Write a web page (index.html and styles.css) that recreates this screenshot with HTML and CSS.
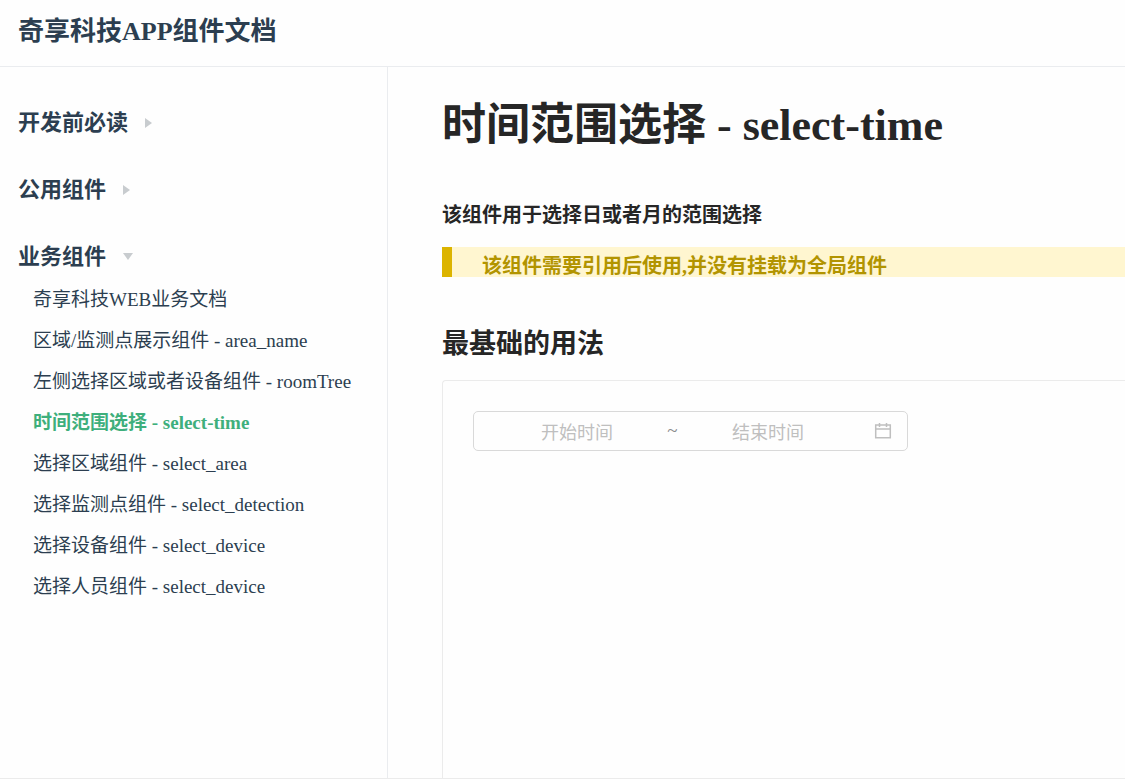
FILE: index.html
```html
<!DOCTYPE html>
<html lang="zh-CN">
<head>
    <meta charset="UTF-8">
    <meta name="viewport" content="width=device-width, initial-scale=1.0">
    <title>时间范围选择 - select-time</title>
    <link rel="stylesheet" href="styles.css">
</head>
<body>
    <header class="navbar">
        <a href="#" class="site-name">奇享科技APP组件文档</a>
    </header>

    <div class="layout">
        <!-- Sidebar -->
        <nav class="sidebar">
            <button type="button" class="group-title">开发前必读 <span class="arrow right"></span></button>
            <button type="button" class="group-title">公用组件 <span class="arrow right"></span></button>
            <button type="button" class="group-title">业务组件 <span class="arrow down"></span></button>
            <ul class="group-items">
                <li><a href="#">奇享科技WEB业务文档</a></li>
                <li><a href="#">区域/监测点展示组件 - area_name</a></li>
                <li><a href="#">左侧选择区域或者设备组件 - roomTree</a></li>
                <li><a href="#" class="active">时间范围选择 - select-time</a></li>
                <li><a href="#">选择区域组件 - select_area</a></li>
                <li><a href="#">选择监测点组件 - select_detection</a></li>
                <li><a href="#">选择设备组件 - select_device</a></li>
                <li><a href="#">选择人员组件 - select_device</a></li>
            </ul>
        </nav>

        <!-- Content -->
        <main class="content">
            <h1>时间范围选择 - select-time</h1>
            <h4>该组件用于选择日或者月的范围选择</h4>
            <div class="warning">该组件需要引用后使用,并没有挂载为全局组件</div>
            <h2>最基础的用法</h2>

            <section class="demo">
                <div class="range-picker">
                    <input type="text" placeholder="开始时间" aria-label="开始时间">
                    <span class="separator">~</span>
                    <input type="text" placeholder="结束时间" aria-label="结束时间">
                    <svg class="calendar" viewBox="0 0 18 18" aria-hidden="true">
                        <path d="M1.700 3h14.600v12.800h-14.600zM1.700 7h14.600M5.500 1v4M12.500 1v4"/>
                    </svg>
                </div>
            </section>
        </main>
    </div>
</body>
</html>
```

FILE: styles.css
```css
* {
    box-sizing: border-box;
}

body {
    margin: 0;
    min-height: 100vh;
    display: flex;
    flex-direction: column;
    font-family: "Liberation Serif", "Noto Sans CJK SC", serif;
    color: #2c3e50;
    background: #fefefe;
    border-bottom: 1px solid #ebebeb;
}

a {
    color: inherit;
    text-decoration: none;
}

.navbar {
    padding: 12px 18px 14px;
    border-bottom: 1px solid #eaecef;
}

.site-name {
    display: block;
    font-size: 26px;
    font-weight: bold;
    line-height: 40px;
}

.layout {
    flex: 1;
    display: flex;
}

.sidebar {
    flex: none;
    width: 388px;
    padding-top: 22px;
    border-right: 1px solid #eaecef;
}

.group-title {
    display: flex;
    align-items: center;
    gap: 17px;
    width: 100%;
    padding: 0 18px;
    border: none;
    background: none;
    font-family: inherit;
    font-size: 22px;
    font-weight: bold;
    line-height: 67px;
    color: inherit;
    cursor: pointer;
}

.arrow.right {
    border-left: 7px solid #c8cccf;
    border-top: 5px solid transparent;
    border-bottom: 5px solid transparent;
}

.arrow.down {
    border-top: 7px solid #c8cccf;
    border-left: 5px solid transparent;
    border-right: 5px solid transparent;
}

.group-items {
    list-style: none;
    margin: -11px 0 0;
    padding: 0 0 0 33px;
    font-size: 19px;
    line-height: 41px;
}

.group-items a {
    display: block;
}

.group-items .active {
    color: #3eaf7c;
    font-weight: bold;
}

.content {
    flex: 1;
    min-width: 0;
    display: flex;
    flex-direction: column;
    padding: 29px 0 0 54px;
    color: #262626;
}

h1,
h2,
h4 {
    margin: 0;
}

h1 {
    font-size: 44px;
    line-height: 60px;
}

h4 {
    margin-top: 44px;
    font-size: 20px;
    line-height: 30px;
}

.warning {
    margin-top: 17px;
    padding: 8px 0 0 30px;
    border-left: 10px solid #dcb400;
    background: #fff6d0;
    color: #b29400;
    font-size: 20px;
    font-weight: bold;
    line-height: 22px;
}

h2 {
    margin-top: 47px;
    font-size: 27px;
    line-height: 40px;
}

.demo {
    flex: 1;
    margin-top: 16px;
    padding: 30px;
    border: 1px solid #ebebeb;
    border-right: none;
    border-bottom: none;
    border-radius: 4px 0 0 0;
}

.range-picker {
    display: flex;
    align-items: center;
    width: 435px;
    max-width: 100%;
    height: 40px;
    padding: 0 15px;
    border: 1px solid #d9d9d9;
    border-radius: 5px;
}

.range-picker input {
    flex: 1;
    min-width: 0;
    padding: 4px 0 0;
    border: none;
    outline: none;
    background: none;
    font-family: inherit;
    font-size: 18px;
    line-height: 34px;
    text-align: center;
    color: #595959;
}

.range-picker input::placeholder {
    color: #bfbfbf;
}

.separator {
    width: 15px;
    font-size: 19px;
    text-align: center;
    color: #8c8c8c;
}

.calendar {
    flex: none;
    width: 18px;
    height: 18px;
    margin-left: 18px;
    fill: none;
    stroke: #bfbfbf;
    stroke-width: 1.5;
}
```
